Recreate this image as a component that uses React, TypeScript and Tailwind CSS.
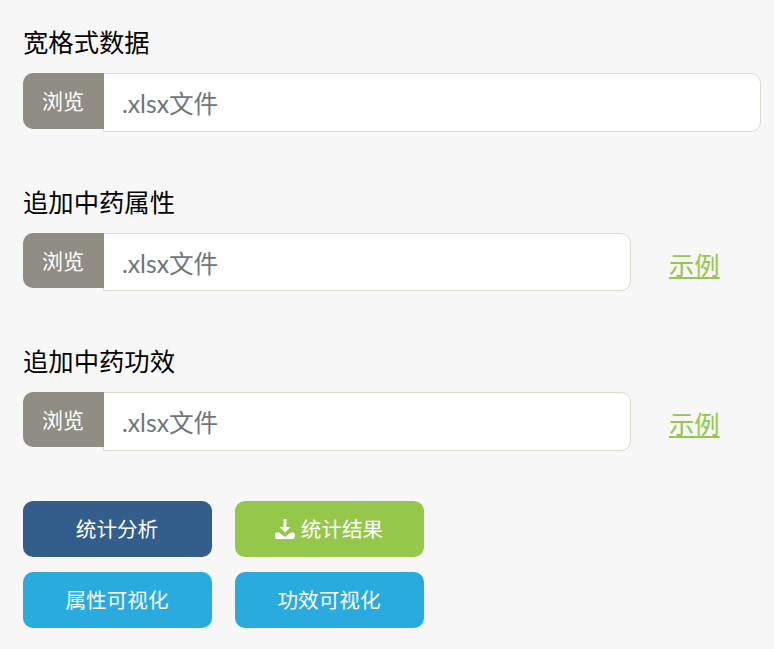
const FONT = "font-['Lato','Noto_Sans_CJK_SC','Noto_Sans',sans-serif]";

function FileRow({ title, wide, top }: { title: string; wide?: boolean; top: string }) {
  return (
    <div className={top}>
      <div className="h-[30px] text-[25.33px] leading-[29px] text-black">{title}</div>
      <div className="mt-[15px] flex items-start">
        <button className="relative z-10 h-[55.4px] w-[81px] rounded-l-[10px] bg-[#908d85] pr-px text-[21px] text-white">
          浏览
        </button>
        <div
          className={`-ml-px flex h-[58.6px] items-center rounded-r-[10px] border border-[#e0d8cd] bg-white pl-[18px] pt-[3px] text-[24.7px] text-[#70757a] ${
            wide ? "w-[658px]" : "w-[528px]"
          }`}
        >
          .xlsx文件
        </div>
        {!wide && (
          <a href="#" className="ml-[38px] mt-[12px] text-[25.33px] leading-[40px] text-[#95c74b] underline">
            示例
          </a>
        )}
      </div>
    </div>
  );
}

function ActionButton({ color, children }: { color: string; children: React.ReactNode }) {
  return (
    <button className={`flex h-[56px] w-[189px] items-center justify-center rounded-[10px] pr-px text-[20.6px] text-white ${color}`}>
      {children}
    </button>
  );
}

export default function App() {
  return (
    <div className={`h-[649px] w-[774px] overflow-hidden bg-[#f7f7f7] pl-[23px] pt-[28.2px] ${FONT}`}>
      <FileRow title="宽格式数据" wide top="" />
      <FileRow title="追加中药属性" top="mt-[55.8px]" />
      <FileRow title="追加中药功效" top="mt-[55.8px]" />
      <div className="mt-[50.4px] grid w-[401px] grid-cols-[189px_189px] gap-x-[23px] gap-y-[15px]">
        <ActionButton color="bg-[#335d8a]">统计分析</ActionButton>
        <ActionButton color="bg-[#95c74b]">
          <svg width="20" height="20" viewBox="0 0 20 20" className="mr-[6px]" fill="#fff">
            <path d="M8.500 0h3v8h4L10 13.500 4.500 8h4z" />
            <path d="M1.500 13.500H4L10 18l3.500-3q1.500-1.500 4-1.500 2.500 0 2.500 3 0 3.500-3 3.500H2q-2 0-2-2v-3q0-1.500 1.500-1.500z" />
          </svg>
          统计结果
        </ActionButton>
        <ActionButton color="bg-[#2aabe0]">属性可视化</ActionButton>
        <ActionButton color="bg-[#2aabe0]">功效可视化</ActionButton>
      </div>
    </div>
  );
}
